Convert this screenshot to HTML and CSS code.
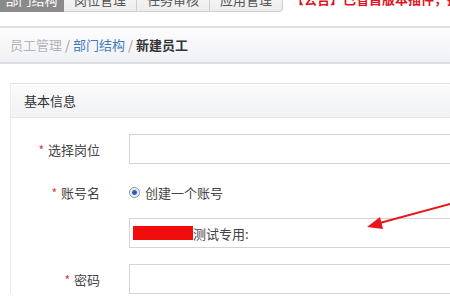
FILE: index.html
```html
<!DOCTYPE html>
<html lang="zh-CN">
<head>
<meta charset="UTF-8">
<title>新建员工</title>
<link rel="stylesheet" href="styles.css">
</head>
<body>
<div class="topnav">
  <a class="tab active">部门结构</a>
  <a class="tab">岗位管理</a>
  <a class="tab">任务审核</a>
  <a class="tab last">应用管理</a>
  <span class="notice">【公告】已省首版本插件，招募</span>
</div>

<div class="crumbs">
  <span class="crumb-off">员工管理</span> <span class="sep">/</span> <a class="crumb-link">部门结构</a> <span class="sep">/</span> <b>新建员工</b>
</div>

<div class="panel">
  <div class="panel-head">基本信息</div>
  <div class="form">
    <label class="lbl"><i>*</i> 选择岗位</label>
    <div class="field"><div class="input"></div></div>

    <label class="lbl"><i>*</i> 账号名</label>
    <div class="field radio-line"><span class="radio"></span>创建一个账号</div>

    <span></span>
    <div class="field"><div class="input filled"><span class="redact"></span>测试专用:</div></div>

    <label class="lbl"><i>*</i> 密码</label>
    <div class="field"><div class="input"></div></div>
  </div>
</div>

<svg class="arrow" width="90" height="40" viewBox="0 0 90 40">
  <line x1="92" y1="11" x2="14" y2="32" stroke="#e8151b" stroke-width="2"/>
  <polygon points="5,35 18,25 21,37" fill="#e8151b"/>
</svg>
</body>
</html>
```

FILE: styles.css
```css
* { margin:0; padding:0; box-sizing:border-box; }
body { font-family:"Noto Sans CJK SC","Noto Sans",sans-serif; font-size:13px; color:#333; background:#fff; width:450px; height:300px; overflow:hidden; position:relative; }

/* TOP TABS */
.topnav { display:flex; align-items:stretch; height:23px; margin-top:-11px; white-space:nowrap; }
.tab { width:73px; flex:none; text-align:center; line-height:20px; color:#555; background:linear-gradient(#fafafa,#ececec); border:1px solid #cfcfcf; border-left:none; font-size:13px; }
.tab.active { width:64px; background:#8a8a8a; color:#fff; border-color:#8a8a8a; }
.tab.last { border-radius:0 0 4px 0; }
.notice { color:#e0141e; font-weight:bold; margin-left:8px; line-height:20px; }

/* BREADCRUMB */
.crumbs { margin-top:14px; height:38px; border-top:2px solid #e2e2e4; border-bottom:2px solid #dcdce2; background:linear-gradient(#fdfdfe,#f0f1f5); padding-left:10px; line-height:34px; font-size:13px; }
.crumb-off { color:#b4b4b4; }
.crumb-link { color:#3f7bbd; }
.sep { color:#999; }
.crumbs b { color:#333; }

/* PANEL */
.panel { margin:19px 0 0 10px; border-top:1px solid #e2e2e2; border-left:1px solid #ececec; }
.panel-head { height:34px; line-height:34px; padding-left:13px; background:linear-gradient(#fbfbfc,#f1f2f5); border-bottom:1px solid #e4e4e8; color:#333; }
.form { display:grid; grid-template-columns:89px 1fr; column-gap:29px; row-gap:0; padding-top:16px; }
.lbl { text-align:right; color:#444; display:flex; align-items:center; justify-content:flex-end; gap:4px; }
.lbl i { color:#d9363e; font-style:normal; font-size:12px; }
.field { min-width:0; }
.input { width:400px; height:30px; border:1px solid #d4d4d4; background:#fff; }
.input.filled { display:flex; align-items:center; padding-left:3px; color:#444; }
.redact { display:inline-block; width:60px; height:14px; background:#f20d0d; }
.radio-line { display:flex; align-items:center; gap:5px; height:16px; margin:20px 0 18px; color:#444; }
.form > .lbl:nth-of-type(2) { margin:20px 0 18px; height:16px; }
.form > .lbl:nth-of-type(3) { margin-top:16px; }
.form > .field:last-child { margin-top:16px; }
.radio { width:11px; height:11px; border-radius:50%; border:1px solid #8a8f99; background:radial-gradient(circle,#1a4f9a 0,#2d6fc4 2px,#dfe6ef 3px,#fff 5px); }

/* overlay arrow */
.arrow { position:absolute; left:362px; top:192px; }
```
